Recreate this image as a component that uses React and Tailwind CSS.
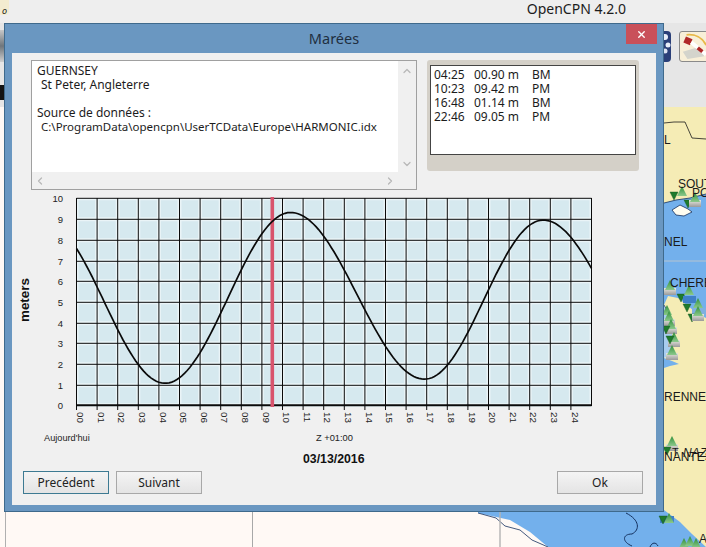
import React from "react";
import { ChevronUp, ChevronDown, ChevronLeft, ChevronRight, X } from "lucide-react";

const STEP = 20.6;
const X0 = 76.5;
const yVals = [405, 385, 364, 343, 323, 302, 281, 261, 240, 219, 198];
const keys = [[-1.6, 8.9], [4.3, 1.05], [10.4, 9.3], [16.9, 1.25], [22.65, 8.93], [29, 1.2]];

function level(h) {
  for (let i = 0; i < keys.length - 1; i++) {
    const [a, va] = keys[i];
    const [b, vb] = keys[i + 1];
    if (h >= a && h <= b) {
      const t = (h - a) / (b - a);
      return vb + ((va - vb) / 2) * (1 + Math.cos(Math.PI * t));
    }
  }
  return 0;
}

const curve = [];
for (let h = 0; h <= 25.001; h += 0.125) {
  curve.push(`${(X0 + h * STEP).toFixed(1)},${(405 - level(h) * 20.7).toFixed(1)}`);
}

function Chart() {
  const hours = Array.from({ length: 26 }, (_, i) => i);
  return (
    <svg viewBox="12 192 645 278" className="block w-[645px] h-[278px]">
      <rect x={X0} y="198" width={25 * STEP} height="207" fill="#d6e9ef" />
      {hours.map((i) => (
        <line key={`h${i}`} x1={X0 + i * STEP} x2={X0 + i * STEP} y1="198" y2="405" stroke="#eaf4f7" strokeWidth="4" />
      ))}
      {yVals.map((y) => (
        <line key={`g${y}`} x1={X0} x2={X0 + 25 * STEP} y1={y + 0.3} y2={y + 0.3} stroke="#eaf4f7" strokeWidth="4" />
      ))}
      <rect x="60" y="192" width="16" height="214" fill="#f0f0f0" />
      <rect x={X0 + 25 * STEP + 0.5} y="192" width="4" height="214" fill="#f0f0f0" />
      <rect x="76" y="194" width="516" height="4" fill="#f0f0f0" />
      {hours.map((i) => (
        <line key={i} x1={X0 + i * STEP} x2={X0 + i * STEP} y1="198" y2={i === 25 ? 406 : 410} stroke="#0a0a0a" strokeWidth="1" />
      ))}
      {yVals.map((y) => (
        <line key={y} x1={X0} x2={X0 + 25 * STEP} y1={y + 0.3} y2={y + 0.3} stroke="#0a0a0a" strokeWidth={y === 405 ? 2 : 1} />
      ))}
      <rect x="270.5" y="197" width="3.6" height="210" fill="#d8536c" />
      <polyline points={curve.join(" ")} fill="none" stroke="#0a0a0a" strokeWidth="1.7" />
      {yVals.map((y, i) => (
        <text key={y} x="63" y={y + 3.5} textAnchor="end" fontSize="9.5" fill="#222" fontFamily="'Liberation Sans', sans-serif">{i}</text>
      ))}
      {hours.slice(0, 25).map((i) => (
        <text
          key={i}
          transform={`translate(${X0 + i * STEP + 0.7} 412) rotate(90)`}
          fontSize="9.8"
          fill="#222"
          fontFamily="'Liberation Sans', sans-serif"
        >
          {String(i).padStart(2, "0")}
        </text>
      ))}
      <text transform="translate(29 322) rotate(-90)" fontSize="13.4" fontWeight="700" fill="#111" fontFamily="'Liberation Sans', sans-serif">meters</text>
      <text x="44" y="441" fontSize="9.2" fill="#222" fontFamily="'Liberation Sans', sans-serif">Aujourd'hui</text>
      <text x="316" y="441" fontSize="9.3" fill="#222" fontFamily="'Liberation Sans', sans-serif">Z +01:00</text>
      <text x="303" y="463" fontSize="12.3" fontWeight="700" fill="#111" fontFamily="'Liberation Sans', sans-serif">03/13/2016</text>
    </svg>
  );
}

function Btn({ children, focused }) {
  return (
    <button
      className={`w-[86px] h-[23px] text-[12px] leading-none text-[#222] border bg-gradient-to-b from-[#f4f4f4] to-[#e4e4e4] ${
        focused ? "border-[#3d7a92]" : "border-[#a8a8a8]"
      }`}
    >
      {children}
    </button>
  );
}

function Up({ x, y, box }) {
  return (
    <g>
      {box && <rect x={x - 6} y={y + 8} width="12" height="7" fill="url(#pinbox)" />}
      <polygon points={`${x},${y} ${x + 5},${y + 10} ${x - 5},${y + 10}`} fill="url(#pinup)" />
    </g>
  );
}

function Down({ x, y }) {
  return <polygon points={`${x - 4},${y} ${x + 4},${y} ${x},${y + 8}`} fill="#1f7a2c" stroke="#12501c" strokeWidth="0.4" />;
}

function MapLayer() {
  const label = { fontFamily: "'Liberation Sans', sans-serif", fontSize: 12, fill: "#1a1a1a" };
  return (
    <svg viewBox="0 107 706 440" className="block w-[706px] h-[440px]">
      <defs>
        <linearGradient id="pinup" x1="0" x2="0" y1="0" y2="1">
          <stop offset="0" stopColor="#2f8f3a" />
          <stop offset="1" stopColor="#8cc98c" />
        </linearGradient>
        <linearGradient id="pinbox" x1="0" x2="0" y1="0" y2="1">
          <stop offset="0" stopColor="#e8e8e0" />
          <stop offset="1" stopColor="#9a9a9a" />
        </linearGradient>
      </defs>
      <rect x="0" y="107" width="706" height="440" fill="#f5ecb5" />
      <rect x="0" y="107" width="664" height="440" fill="#fff9f5" />
      <path d="M664 203 L676 200 L690 198 L706 194 L706 318 L698 314 L688 306 L678 298 L668 296 L664 305 L664 203 Z" fill="#73b0ec" />
      <path d="M664 203 L676 200 L690 198 L706 194" fill="none" stroke="#14305e" strokeWidth="0.8" />
      <path d="M672 210 L680 205 L688 209 L692 212 L684 216 L676 215 Z" fill="#fffdf0" stroke="#14305e" strokeWidth="0.8" />
      <line x1="664" x2="706" y1="261" y2="261" stroke="#b7c4d0" />
      <path d="M664 305 L668 312 L672 325 L672 345 L668 356 L664 358 Z" fill="#a8cdef" />
      <path d="M664 305 L668 312 L672 325" fill="none" stroke="#14305e" strokeWidth="0.7" />
      <path d="M664 358 L672 361 L679 364 L670 366 L664 368 Z" fill="#73b0ec" />
      <path d="M478 513 L510 520 L530 532 L548 547 L706 547 L692 534 L680 522 L664 510 L478 510 Z" fill="#73b0ec" />
      <path d="M478 513 L496 518 L505 526 L520 530 L532 540 L548 547" fill="none" stroke="#14305e" strokeWidth="0.8" />
      <path d="M626 513 C640 520 640 530 632 534 C622 534 622 542 632 546 M650 547 C652 542 656 542 658 546" fill="none" stroke="#14305e" strokeWidth="1" />
      <line x1="5.5" x2="5.5" y1="512" y2="547" stroke="#b0b0b0" />
      <line x1="252.5" x2="252.5" y1="512" y2="547" stroke="#a8a8a8" />
      <line x1="500" x2="500" y1="512" y2="547" stroke="#b4b4b4" strokeWidth="1.4" />
      <path d="M664 123 L674 122 L685 122 L692 138 L706 139" fill="none" stroke="#1a1a1a" strokeWidth="0.8" />
      <text x="664" y="144" {...label}>L</text>

      <Down x={674} y={192} />
      <Up x={682} y={186} />
      <Down x={688} y={200} />
      <Up x={695} y={192} box="#3f7fc8" />
      <text x="678" y="188" {...label}>SOUT</text>
      <text x="692" y="197" {...label}>PO</text>
      <text x="664" y="246" {...label}>NEL</text>

      <Up x={670} y={280} box />
      <Down x={681} y={294} />
      <Up x={689} y={285} />
      <rect x="683" y="296" width="13" height="7" fill="#3f7fc8" />
      <Down x={687} y={304} />
      <Up x={698} y={298} />
      <rect x="692" y="308" width="14" height="7" fill="#7fb0e0" />
      <Down x={692} y={314} />
      <Up x={698} y={306} box />
      <Up x={667} y={305} />
      <Up x={669} y={311} box />
      <Up x={671} y={319} box />
      <Down x={666} y={326} />
      <Up x={674} y={332} box />
      <Down x={670} y={336} />
      <Up x={672} y={345} box />
      <text x="670" y="287" {...label}>CHERB</text>

      <text x="664" y="401" {...label}>RENNES</text>
      <Up x={672} y={436} box />
      <Down x={667} y={447} />
      <text x="664" y="461" {...label}>NANTES</text>
      <text x="672" y="456" {...label} fontSize="11">T</text>
      <text x="683" y="457" {...label} fontStyle="italic">NAZ</text>
      <rect x="660" y="516" width="14" height="7" fill="#3f7fc8" />
      <Up x={669} y={513} />
      <Down x={663} y={516} />
      <Up x={684} y={538} />
      <Up x={690} y={536} />
      <Up x={696} y={538} />
      <text x="699" y="543" {...label}>A</text>
    </svg>
  );
}

export default function App() {
  return (
    <div className="relative w-[706px] h-[547px] overflow-hidden bg-[#e6e6e6]" style={{ fontFamily: "'Noto Sans', Tahoma, sans-serif" }}>
      <div className="flex justify-end h-[23px] pr-[80px] bg-[#eeeeee] text-[14px] leading-[17px] text-[#1c1c1c]">OpenCPN 4.2.0</div>
      <div className="relative h-[84px] bg-[#e6e6e6]">
        <div className="absolute left-0 top-[-23px] w-[9px] h-[15px] bg-[#f3ecd0] rounded-br-sm flex items-end justify-center text-[9px] italic leading-[9px] text-[#111]">o</div>
        <div className="absolute left-0 top-[7px] w-[4px] h-[32px] bg-gradient-to-b from-[#c8c8c8] via-[#6f767c] to-[#d0d0d0]" />
        <div className="absolute left-0 top-[62px] w-[4px] h-[15px] bg-[#141414]" />
        <div className="absolute left-[664px] top-[8px] w-[7px] h-[31px] rounded-r-sm bg-[#2a3f78] overflow-hidden">
          <svg viewBox="0 0 7 31" className="w-full h-full">
            <circle cx="1" cy="6" r="3" fill="#e8eef8" />
            <circle cx="4" cy="14" r="2.5" fill="#e8eef8" />
            <circle cx="1" cy="20" r="2.5" fill="#dce4f2" />
          </svg>
        </div>
        <div className="absolute left-[679px] top-[8px] w-[30px] h-[31px] rounded-[3px] border border-[#8a8a8a] bg-[#f8efd8] overflow-hidden">
          <svg viewBox="0 0 30 31" className="w-full h-full">
            <path d="M7 3 C16 2 24 6 28 14" fill="none" stroke="#e8b848" strokeWidth="2" />
            <path d="M3 21 L20 16 L26 26 L8 29 Z" fill="#d4d4cc" />
            <path d="M5 8 L12 11" stroke="#b02828" strokeWidth="7" />
            <path d="M12 11 L28 24" stroke="#ffffff" strokeWidth="4" />
            <path d="M19 17 L24 21" stroke="#b02828" strokeWidth="4" />
          </svg>
        </div>
      </div>
      <MapLayer />

      <div className="absolute left-[4px] top-[23px] w-[660px] h-[489px] flex flex-col bg-[#6a97c1] border border-[#3f6a8c] px-[7px] pb-[6px]">
        <div className="relative h-[29px] shrink-0 flex items-center justify-center text-[14.5px] text-[#1f2f40]">
          Marées
          <div className="absolute right-[-1px] top-0 w-[31px] h-[20px] bg-[#c9505a] flex items-center justify-center">
            <X size={11} strokeWidth={3} color="#ffffff" />
          </div>
        </div>
        <div className="flex-1 bg-[#f0f0f0] flex flex-col">
          <div className="flex gap-[10px] pl-[19px] pt-[7px] h-[139px]">
            <div className="relative w-[386px] h-[130px] bg-[#f0f0f0] border border-[#a0a0a0] flex">
              <div className="flex flex-col flex-1">
                <div className="flex-1 bg-white pl-[5px] pt-[3px] text-[12px] leading-[14px] text-[#1c1c1c] whitespace-nowrap">
                  <div>GUERNSEY</div>
                  <div className="pl-[4px]">St Peter, Angleterre</div>
                  <div className="h-[14px]" />
                  <div>Source de données :</div>
                  <div className="pl-[4px] text-[11.5px]">C:\ProgramData\opencpn\UserTCData\Europe\HARMONIC.idx</div>
                </div>
                <div className="h-[17px] flex items-center justify-between px-[2px]">
                  <ChevronLeft size={12} strokeWidth={2.5} color="#b8b8b8" />
                  <ChevronRight size={12} strokeWidth={2.5} color="#b8b8b8" />
                </div>
              </div>
              <div className="w-[18px] flex flex-col items-center justify-between pt-[4px] pb-[19px]">
                <ChevronUp size={12} strokeWidth={2.5} color="#b8b8b8" />
                <ChevronDown size={12} strokeWidth={2.5} color="#b8b8b8" />
              </div>
            </div>
            <div className="w-[212px] h-[111px] bg-[#d4d0c8] rounded-[3px] pt-[5px] px-[3px]">
              <div className="h-[90px] bg-white border border-[#444444] pl-[3px] pt-[2px] text-[12px] leading-[14px] text-[#1c1c1c]">
                {[
                  ["04:25", "00.90 m", "BM"],
                  ["10:23", "09.42 m", "PM"],
                  ["16:48", "01.14 m", "BM"],
                  ["22:46", "09.05 m", "PM"],
                ].map((r) => (
                  <div key={r[0]} className="flex h-[14px]">
                    <span className="w-[40px]">{r[0]}</span>
                    <span className="w-[58px]">{r[1]}</span>
                    <span>{r[2]}</span>
                  </div>
                ))}
              </div>
            </div>
          </div>
          <Chart />
          <div className="flex items-start pl-[11px] pr-[13px] pt-[1px] gap-[7px]">
            <Btn focused>Precédent</Btn>
            <Btn>Suivant</Btn>
            <div className="flex-1" />
            <Btn>Ok</Btn>
          </div>
        </div>
      </div>
    </div>
  );
}
